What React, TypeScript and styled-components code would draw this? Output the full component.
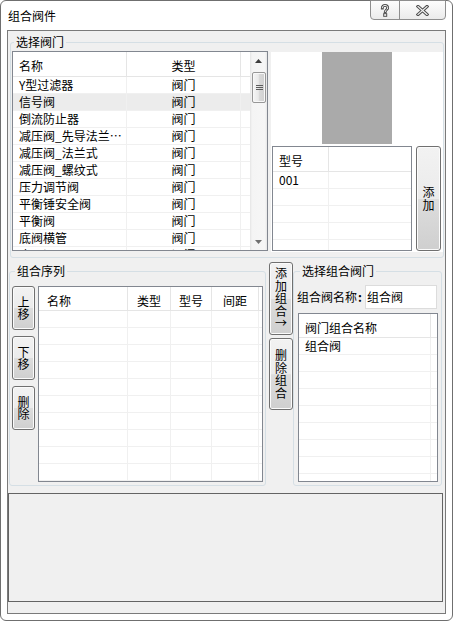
import React from 'react';
import styled, { createGlobalStyle } from 'styled-components';

const GlobalStyle = createGlobalStyle`
  html, body { margin: 0; padding: 0; background: #fff; }
  body {
    font-family: "Noto Sans CJK SC", "Noto Sans", sans-serif;
    font-size: 12px;
    color: #000;
  }
  * { box-sizing: border-box; }
`;

const Window = styled.div`
  width: 453px;
  height: 621px;
  border: 1px solid #6f6f6f;
  border-radius: 6px;
  background: #fff;
  padding: 0 6px 6px;
  display: flex;
  flex-direction: column;
`;

const TitleBar = styled.div`
  height: 29px;
  display: flex;
  justify-content: space-between;
  align-items: flex-start;
`;

const Title = styled.div`
  margin: 8px 0 0 1px;
  line-height: 14px;
  font-size: 12px;
`;

const CaptionGroup = styled.div`
  margin-top: -1px;
  height: 20px;
  display: flex;
  border: 1px solid #8e8e8e;
  border-radius: 0 0 4px 4px;
  overflow: hidden;
  background: linear-gradient(#fdfdfd, #ebebeb);
`;

const CaptionButton = styled.div<{ $w: number }>`
  width: ${(p) => p.$w}px;
  display: flex;
  align-items: center;
  justify-content: center;
  & + & { border-left: 1px solid #8e8e8e; }
`;

const Client = styled.div`
  height: 584px;
  border: 1px solid #7a7a7a;
  background: #f0f0f0;
  display: flex;
  flex-direction: column;
  padding-top: 4px;
`;

const Group = styled.fieldset<{ $w: number; $m: string; $pad: string }>`
  width: ${(p) => p.$w}px;
  min-width: 0;
  margin: ${(p) => p.$m};
  padding: ${(p) => p.$pad};
  border: 1px solid #d5dfe5;
  border-radius: 3px;
`;

const GroupLabel = styled.legend<{ $ml: number }>`
  margin-left: ${(p) => p.$ml}px;
  padding: 0 2px;
  height: 14px;
  line-height: 14px;
  font-size: 12px;
`;

const TopRow = styled.div`
  display: flex;
  align-items: flex-start;
  gap: 3px;
`;

const ListBox = styled.div<{ $w: number; $h: number; $m?: string }>`
  width: ${(p) => p.$w}px;
  height: ${(p) => p.$h}px;
  margin: ${(p) => p.$m ?? '0'};
  flex-shrink: 0;
  border: 1px solid #828790;
  background: #fff;
  display: flex;
  overflow: hidden;
`;

const TableBody = styled.div`
  flex: 1;
  min-width: 0;
  overflow: hidden;
  display: flex;
  flex-direction: column;
`;

const GridRow = styled.div<{ $cols: string; $h: number; $head?: boolean; $sel?: boolean }>`
  display: grid;
  grid-template-columns: ${(p) => p.$cols};
  height: ${(p) => p.$h}px;
  flex-shrink: 0;
  border-bottom: 1px solid ${(p) => (p.$head ? '#e5e5e5' : '#f0f0f0')};
  background: ${(p) => (p.$sel ? '#ececec' : '#fff')};
`;

const Cell = styled.div<{ $align?: 'left' | 'center'; $pad?: number; $head?: boolean }>`
  display: flex;
  align-items: center;
  justify-content: ${(p) => (p.$align === 'center' ? 'center' : 'flex-start')};
  padding-left: ${(p) => (p.$align === 'center' ? 0 : p.$pad ?? 6)}px;
  padding-top: ${(p) => (p.$head ? 4 : 0)}px;
  border-right: 1px solid ${(p) => (p.$head ? '#e5e5e5' : '#f0f0f0')};
  line-height: 14px;
  white-space: nowrap;
  overflow: hidden;
  &:last-child { border-right: none; }
`;

const Scrollbar = styled.div`
  width: 17px;
  flex-shrink: 0;
  display: flex;
  flex-direction: column;
  background: linear-gradient(to right, #e4e4e4 0, #f4f4f4 2px, #f6f6f6 15px, #e6e6e6 17px);
`;

const ScrollArrow = styled.div`
  height: 17px;
  display: flex;
  align-items: center;
  justify-content: center;
`;

const Thumb = styled.div`
  margin: 3px 1px 0 2px;
  height: 31px;
  border: 1px solid #979797;
  border-radius: 2px;
  background: linear-gradient(to right, #f5f5f5 0%, #e9e9e9 45%, #d9d9d9 50%, #d0d0d0 100%);
  box-shadow: inset 0 0 0 1px #f8f8f8;
  display: flex;
  align-items: center;
  justify-content: center;
`;

const TrackFill = styled.div`
  flex: 1;
`;

const PreviewPanel = styled.div`
  width: 172px;
  height: 200px;
  margin-top: 1px;
  background: #fff;
  display: flex;
  flex-direction: column;
  align-items: center;
`;

const Preview = styled.div`
  width: 70px;
  height: 92px;
  background: #aaaaaa;
`;

const PanelBottom = styled.div`
  align-self: stretch;
  display: flex;
  gap: 4px;
  margin: 2px 0 0 1px;
`;

const AeroButton = styled.button<{ $w: number; $h: number }>`
  width: ${(p) => p.$w}px;
  height: ${(p) => p.$h}px;
  flex-shrink: 0;
  margin: 0;
  padding: 0;
  border: 1px solid #707070;
  border-radius: 3px;
  background: linear-gradient(#f2f2f2 0%, #ebebeb 50%, #dddddd 51%, #cfcfcf 100%);
  box-shadow: inset 0 0 0 1px #fbfbfb;
  font-family: inherit;
  font-size: 12px;
  line-height: 12.5px;
  color: #000;
  white-space: pre-line;
  text-align: center;
  display: flex;
  align-items: center;
  justify-content: center;
`;

const BottomRow = styled.div`
  display: flex;
  align-items: flex-start;
  margin-top: 4px;
`;

const SeqContent = styled.div`
  display: flex;
  align-items: flex-start;
  gap: 3px;
`;

const ButtonColumn = styled.div<{ $gap: number; $ml?: number }>`
  display: flex;
  flex-direction: column;
  gap: ${(p) => p.$gap}px;
  margin-left: ${(p) => p.$ml ?? 0}px;
`;

const NameRow = styled.div`
  height: 24px;
  display: flex;
  align-items: center;
  justify-content: space-between;
`;

const FieldLabel = styled.span`
  line-height: 14px;
  white-space: nowrap;
  b { font-weight: bold; margin-left: 1px; }
`;

const TextBox = styled.div`
  width: 72px;
  height: 24px;
  margin-right: 1px;
  border: 1px solid #dcdcdc;
  background: #fff;
  padding-left: 1px;
  line-height: 22px;
`;

const OutputBox = styled.div`
  width: 435px;
  height: 109px;
  margin-top: 7px;
  border: 1px solid #646464;
  background: #f0f0f0;
`;

interface Column {
  title: string;
  width: string;
  align?: 'left' | 'center';
  pad?: number;
}

interface TableProps {
  columns: Column[];
  rows: string[][];
  rowCount: number;
  headHeight: number;
  selected?: number;
}

function Table({ columns, rows, rowCount, headHeight, selected }: TableProps) {
  const template = columns.map((c) => c.width).join(' ');
  return (
    <TableBody>
      <GridRow $cols={template} $h={headHeight} $head>
        {columns.map((c, i) => (
          <Cell key={i} $head $align={c.align} $pad={c.pad}>
            {c.title}
          </Cell>
        ))}
      </GridRow>
      {Array.from({ length: rowCount }, (_, r) => (
        <GridRow key={r} $cols={template} $h={17} $sel={r === selected}>
          {columns.map((c, i) => (
            <Cell key={i} $align={c.align} $pad={c.pad}>
              {rows[r]?.[i] ?? ''}
            </Cell>
          ))}
        </GridRow>
      ))}
    </TableBody>
  );
}

const HelpGlyph = () => (
  <svg width="10" height="13" viewBox="0 0 10 13">
    <path d="M2.3 4.2C2.3 2.3 3.5 1.4 5 1.4S7.7 2.3 7.7 3.9C7.7 5.7 5.2 5.9 5.2 8.1" fill="none" stroke="#4d4d4d" strokeWidth="2.8" strokeLinecap="square" />
    <path d="M2.3 4.2C2.3 2.3 3.5 1.4 5 1.4S7.7 2.3 7.7 3.9C7.7 5.7 5.2 5.9 5.2 8.1" fill="none" stroke="#fff" strokeWidth="0.9" />
    <rect x="3.7" y="9.7" width="3" height="2.6" fill="#fff" stroke="#4d4d4d" strokeWidth="1" />
  </svg>
);

const CloseGlyph = () => (
  <svg width="13" height="11" viewBox="0 0 13 11">
    <path d="M2 1.5L11 9.5M11 1.5L2 9.5" stroke="#4d4d4d" strokeWidth="3.2" strokeLinecap="square" />
    <path d="M2 1.5L11 9.5M11 1.5L2 9.5" stroke="#f2f2f2" strokeWidth="1.2" strokeLinecap="square" />
  </svg>
);

const ArrowUp = () => (
  <svg width="7" height="4" viewBox="0 0 7 4">
    <path d="M0 4L3.5 0L7 4Z" fill="#3d3d3d" />
  </svg>
);

const ArrowDown = () => (
  <svg width="7" height="4" viewBox="0 0 7 4">
    <path d="M0 0L3.5 4L7 0Z" fill="#707070" />
  </svg>
);

const Grip = () => (
  <svg width="7" height="7" viewBox="0 0 7 7">
    <path d="M0 1.5H7M0 3.5H7M0 5.5H7" stroke="#5c5c5c" strokeWidth="1" />
  </svg>
);

const valves = [
  ['Y型过滤器', '阀门'],
  ['信号阀', '阀门'],
  ['倒流防止器', '阀门'],
  ['减压阀_先导法兰…', '阀门'],
  ['减压阀_法兰式', '阀门'],
  ['减压阀_螺纹式', '阀门'],
  ['压力调节阀', '阀门'],
  ['平衡锤安全阀', '阀门'],
  ['平衡阀', '阀门'],
  ['底阀横管', '阀门'],
  ['止回阀', '阀门'],
];

const valveCols: Column[] = [
  { title: '名称', width: '114px' },
  { title: '类型', width: '114px', align: 'center' },
  { title: '', width: '1fr' },
];

const modelCols: Column[] = [
  { title: '型号', width: '56px' },
  { title: '', width: '1fr' },
];

const seqCols: Column[] = [
  { title: '名称', width: '89px', pad: 8 },
  { title: '类型', width: '43px', align: 'center' },
  { title: '型号', width: '41px', align: 'center' },
  { title: '间距', width: '47px', align: 'center' },
  { title: '', width: '1fr' },
];

const combCols: Column[] = [
  { title: '阀门组合名称', width: '132px' },
  { title: '', width: '1fr' },
];

export default function App() {
  return (
    <>
      <GlobalStyle />
      <Window>
        <TitleBar>
          <Title>组合阀件</Title>
          <CaptionGroup>
            <CaptionButton $w={28}>
              <HelpGlyph />
            </CaptionButton>
            <CaptionButton $w={46}>
              <CloseGlyph />
            </CaptionButton>
          </CaptionGroup>
        </TitleBar>

        <Client>
          <Group $w={434} $m="0 1px 0 2px" $pad="2px 0 5px 1px">
            <GroupLabel $ml={2}>选择阀门</GroupLabel>
            <TopRow>
              <ListBox $w={256} $h={200}>
                <Table columns={valveCols} rows={valves} rowCount={11} headHeight={25} selected={1} />
                <Scrollbar>
                  <ScrollArrow>
                    <ArrowUp />
                  </ScrollArrow>
                  <Thumb>
                    <Grip />
                  </Thumb>
                  <TrackFill />
                  <ScrollArrow>
                    <ArrowDown />
                  </ScrollArrow>
                </Scrollbar>
              </ListBox>
              <PreviewPanel>
                <Preview />
                <PanelBottom>
                  <ListBox $w={140} $h={105}>
                    <Table columns={modelCols} rows={[['001', '']]} rowCount={5} headHeight={25} />
                  </ListBox>
                  <AeroButton $w={25} $h={105}>{'添\n加'}</AeroButton>
                </PanelBottom>
              </PreviewPanel>
            </TopRow>
          </Group>

          <BottomRow>
            <Group $w={257} $m="2px 0 0 1px" $pad="8px 2px 3px 2px">
              <GroupLabel $ml={3}>组合序列</GroupLabel>
              <SeqContent>
                <ButtonColumn $gap={6}>
                  <AeroButton $w={23} $h={44}>{'上\n移'}</AeroButton>
                  <AeroButton $w={23} $h={44}>{'下\n移'}</AeroButton>
                  <AeroButton $w={23} $h={44}>{'删\n除'}</AeroButton>
                </ButtonColumn>
                <ListBox $w={225} $h={196}>
                  <Table columns={seqCols} rows={[]} rowCount={10} headHeight={24} />
                </ListBox>
              </SeqContent>
            </Group>

            <ButtonColumn $gap={3} $ml={3}>
              <AeroButton $w={24} $h={73}>{'添\n加\n组\n合\n→'}</AeroButton>
              <AeroButton $w={24} $h={72}>{'删\n除\n组\n合'}</AeroButton>
            </ButtonColumn>

            <Group $w={149} $m="2px 0 0 0" $pad="7px 3px 3px 3px">
              <GroupLabel $ml={3}>选择组合阀门</GroupLabel>
              <NameRow>
                <FieldLabel>
                  组合阀名称<b>:</b>
                </FieldLabel>
                <TextBox>组合阀</TextBox>
              </NameRow>
              <ListBox $w={140} $h={169} $m="4px 0 0 1px">
                <Table columns={combCols} rows={[['组合阀', '']]} rowCount={9} headHeight={24} />
              </ListBox>
            </Group>
          </BottomRow>

          <OutputBox />
        </Client>
      </Window>
    </>
  );
}
